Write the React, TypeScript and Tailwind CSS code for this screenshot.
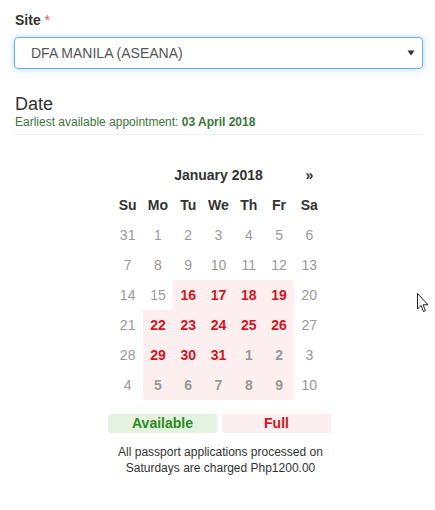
import React from "react";

type Cell = { d: number; kind: "off" | "full" | "fullgray" };

const rows: Cell[][] = [
  [31, 1, 2, 3, 4, 5, 6].map((d) => ({ d, kind: "off" as const })),
  [7, 8, 9, 10, 11, 12, 13].map((d) => ({ d, kind: "off" as const })),
  [
    { d: 14, kind: "off" },
    { d: 15, kind: "off" },
    { d: 16, kind: "full" },
    { d: 17, kind: "full" },
    { d: 18, kind: "full" },
    { d: 19, kind: "full" },
    { d: 20, kind: "off" },
  ],
  [
    { d: 21, kind: "off" },
    { d: 22, kind: "full" },
    { d: 23, kind: "full" },
    { d: 24, kind: "full" },
    { d: 25, kind: "full" },
    { d: 26, kind: "full" },
    { d: 27, kind: "off" },
  ],
  [
    { d: 28, kind: "off" },
    { d: 29, kind: "full" },
    { d: 30, kind: "full" },
    { d: 31, kind: "full" },
    { d: 1, kind: "fullgray" },
    { d: 2, kind: "fullgray" },
    { d: 3, kind: "off" },
  ],
  [
    { d: 4, kind: "off" },
    { d: 5, kind: "fullgray" },
    { d: 6, kind: "fullgray" },
    { d: 7, kind: "fullgray" },
    { d: 8, kind: "fullgray" },
    { d: 9, kind: "fullgray" },
    { d: 10, kind: "off" },
  ],
];

function DayCell({ c }: { c: Cell }) {
  if (c.kind === "off") {
    return (
      <div className="h-[30px] flex items-center justify-center text-[14px] text-[#999999]">
        {c.d}
      </div>
    );
  }
  if (c.kind === "full") {
    return (
      <div className="h-[30px] flex items-center justify-center text-[14px] font-bold text-[#d0161e] bg-[#fdeef0]">
        {c.d}
      </div>
    );
  }
  return (
    <div className="h-[30px] flex items-center justify-center text-[14px] font-bold text-[#999999] bg-[#fdeef0]">
      {c.d}
    </div>
  );
}

export default function App() {
  return (
    <div
      className="relative w-[435px] h-[510px] bg-white text-[#333333] overflow-hidden"
      style={{ fontFamily: '"Liberation Sans", Arial, sans-serif' }}
    >
      <div className="px-[14px] pt-[10px]">
        <div className="text-[14px] font-bold leading-[20px] pl-[1px]">
          Site <span className="text-[#d9534f] font-normal">*</span>
        </div>
        <div className="mt-[7px] h-[32px] w-[409px] rounded-[4px] border border-[#66afe9] shadow-[0_0_6px_rgba(102,175,233,0.5)] flex items-center justify-between pl-[16px] pr-[7px]">
          <span className="text-[14px] text-[#555555]">DFA MANILA (ASEANA)</span>
          <svg width="8" height="6" viewBox="0 0 8 6">
            <path d="M0.5 0.5 L7.5 0.5 L4 5.5 Z" fill="#333" />
          </svg>
        </div>

        <div className="mt-[24px] pl-[1px] text-[18px] leading-[22px]">Date</div>
        <div className="pl-[1px] text-[12px] leading-[14px] text-[#3c763d]">
          Earliest available appointment: <span className="font-bold">03 April 2018</span>
        </div>
        <div className="mt-[5px] w-[409px] h-px bg-[#eeeeee]" />

        <div className="mt-[25px] flex justify-center pl-[2px]">
          <div className="w-[212px]">
            <div className="grid grid-cols-7 h-[30px] items-center text-[14px] font-bold">
              <div />
              <div className="col-span-5 text-center">January 2018</div>
              <div className="text-center">»</div>
            </div>
            <div className="grid grid-cols-7 h-[30px] items-center text-[14px] font-bold">
              {["Su", "Mo", "Tu", "We", "Th", "Fr", "Sa"].map((d) => (
                <div key={d} className="text-center">
                  {d}
                </div>
              ))}
            </div>
            {rows.map((r, i) => (
              <div key={i} className="grid grid-cols-7">
                {r.map((c, j) => (
                  <DayCell key={j} c={c} />
                ))}
              </div>
            ))}
          </div>
        </div>

        <div className="mt-[14px] flex justify-center gap-[5px] pl-[4px]">
          <div className="w-[109px] h-[19px] rounded-[3px] bg-[#e4f2e0] flex items-center justify-center text-[14px] font-bold text-[#2a8a1c]">
            Available
          </div>
          <div className="w-[109px] h-[19px] rounded-[3px] bg-[#fdeef0] flex items-center justify-center text-[14px] font-bold text-[#d0161e]">
            Full
          </div>
        </div>
        <div className="mt-[11px] text-center text-[12px] leading-[16px] pl-[6px]">
          All passport applications processed on
          <br />
          Saturdays are charged Php1200.00
        </div>
      </div>

      <svg
        className="absolute left-[417px] top-[293px]"
        width="12"
        height="20"
        viewBox="0 0 12 20"
      >
        <path
          d="M0.5 0.5 L0.5 16 L4 12.5 L6.5 18.5 L8.5 17.6 L6 11.8 L11 11.8 Z"
          fill="white"
          stroke="#222"
          strokeWidth="1"
          strokeLinejoin="round"
        />
      </svg>
    </div>
  );
}
